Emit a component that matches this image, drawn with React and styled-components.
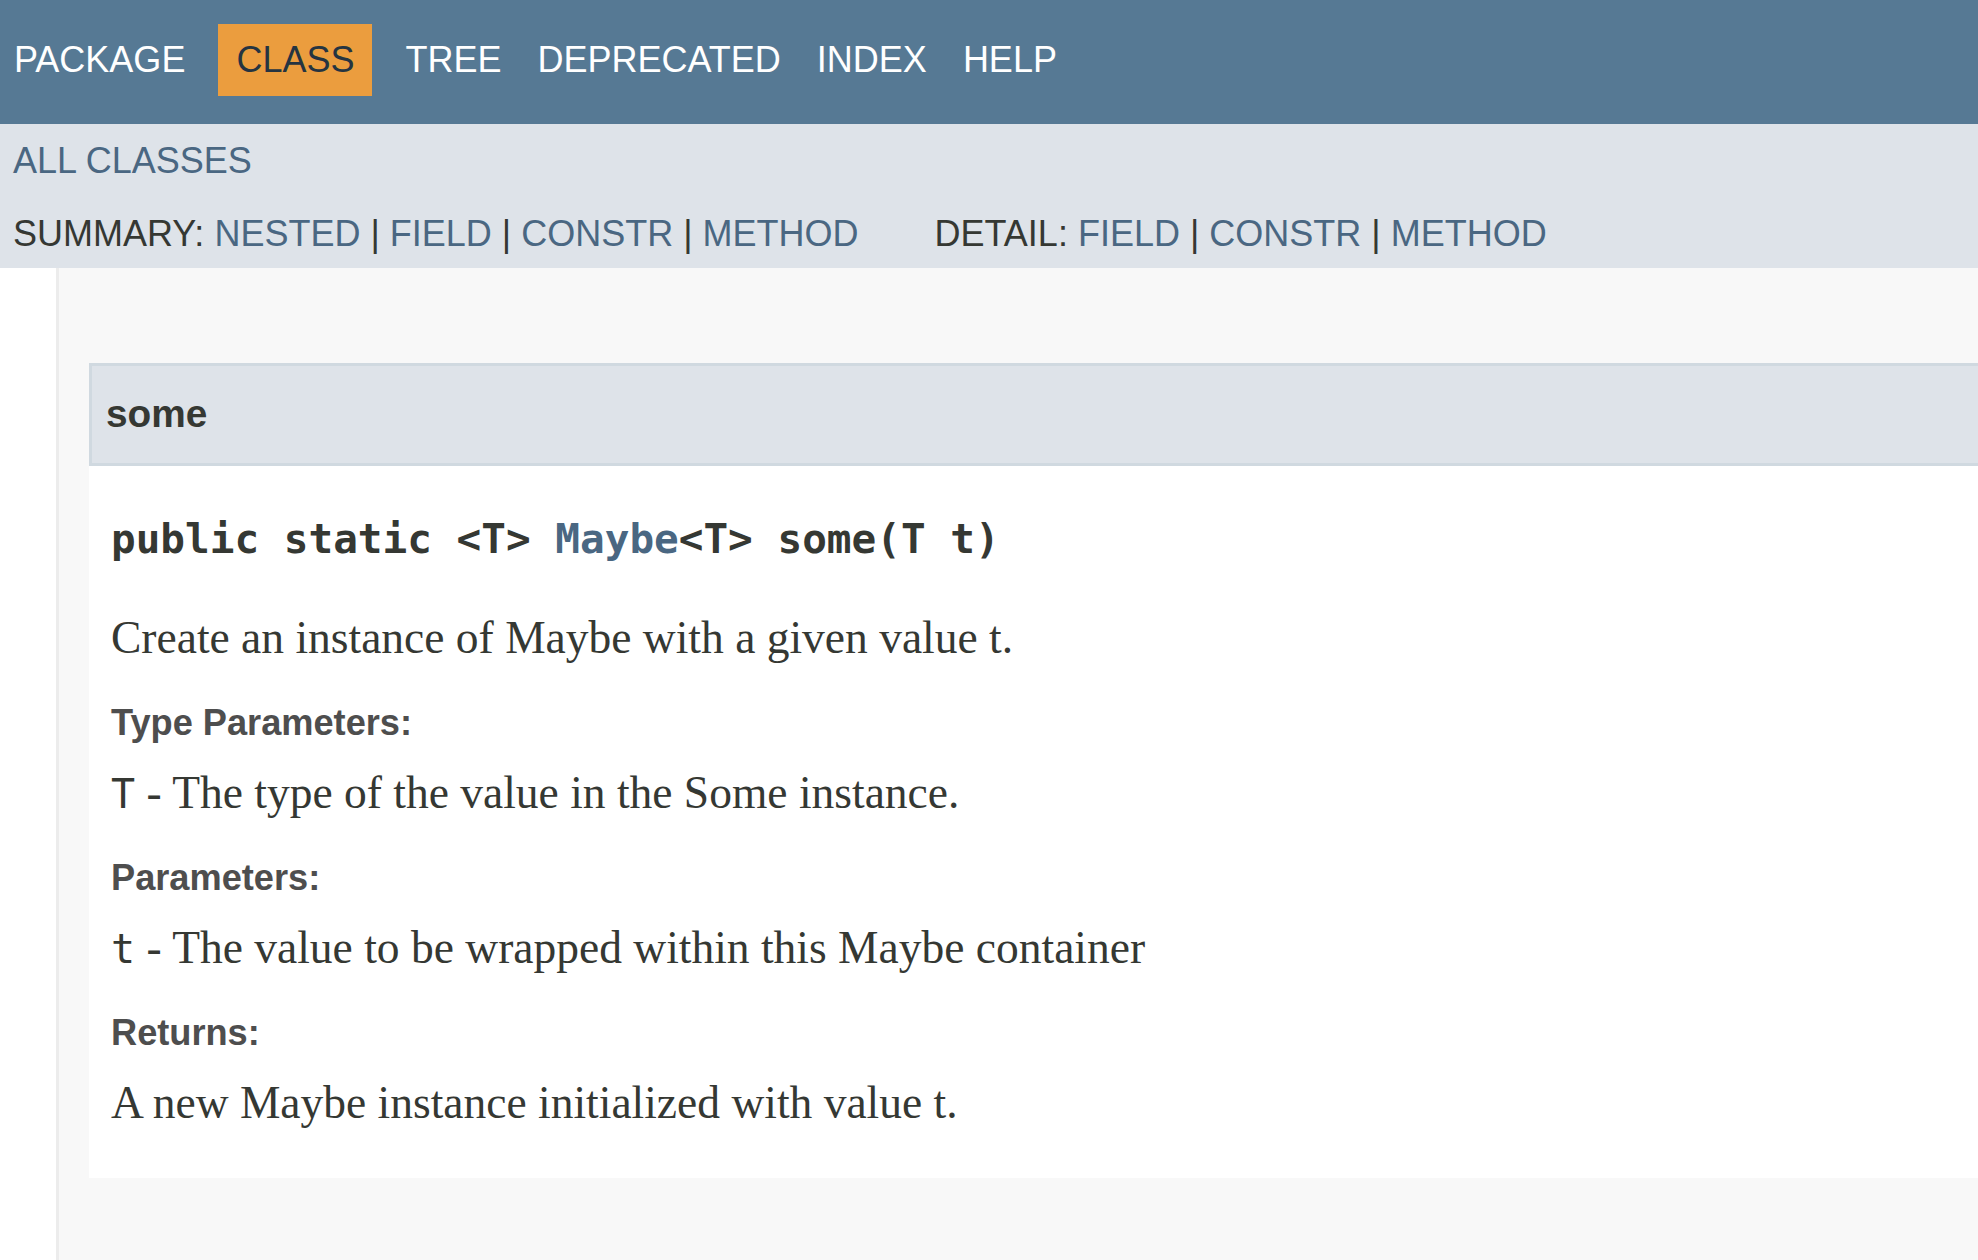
import React from "react";
import styled, { createGlobalStyle } from "styled-components";

const GlobalStyle = createGlobalStyle`
  html, body {
    margin: 0;
    padding: 0;
    background: #ffffff;
    overflow: hidden;
  }
  * {
    box-sizing: border-box;
  }
`;

const Page = styled.div`
  display: flex;
  flex-direction: column;
  min-height: 100vh;
  font-family: "Liberation Sans", Arial, Helvetica, sans-serif;
  color: #353833;
`;

const TopNav = styled.nav`
  display: flex;
  height: 124px;
  padding-top: 24px;
  background: #567994;
`;

const NavList = styled.ul`
  display: flex;
  align-items: flex-start;
  list-style: none;
  margin: 0 0 0 -4px;
  padding: 0;
`;

const NavItem = styled.li`
  padding: 15px 18px;
  margin: ${(p) => (p.$active ? "0 15px" : "0")};
  font-size: 36px;
  line-height: 42px;
  color: ${(p) => (p.$active ? "#253441" : "#ffffff")};
  background: ${(p) => (p.$active ? "#eb9d3e" : "transparent")};
  white-space: nowrap;
`;

const SubNav = styled.div`
  height: 144px;
  padding: 16px 0 0 13px;
  background: #dee3e9;
  font-size: 36px;
  line-height: 42px;
`;

const NavLink = styled.a`
  color: #4a6782;
  text-decoration: none;
`;

const SubNavRow = styled.div`
  display: flex;
  margin-top: 31px;
  white-space: pre;
`;

const SubNavGroup = styled.div`
  display: flex;
  margin-right: ${(p) => p.$gap || 0}px;
`;

const Content = styled.div`
  display: flex;
  flex: 1;
`;

const LeftStrip = styled.div`
  width: 56px;
  background: #ffffff;
`;

const Main = styled.main`
  flex: 1;
  border-left: 3px solid #ececec;
  background: #f8f8f8;
  padding: 95px 0 0 30px;
`;

const MemberHeader = styled.h4`
  margin: 0;
  padding: 24px 0 25px 14px;
  background: #dee3e9;
  border: 3px solid #d0d9e0;
  border-right: none;
  font-size: 38.8px;
  font-weight: bold;
  line-height: 48px;
  color: #353833;
`;

const MemberBody = styled.section`
  background: #ffffff;
  padding: 49px 0 48px 22px;
`;

const Signature = styled.pre`
  margin: 0;
  font-family: "DejaVu Sans Mono", "Liberation Mono", monospace;
  font-size: 41px;
  font-weight: bold;
  line-height: 48px;
  color: #353833;
`;

const Description = styled.div`
  margin-top: 48px;
  font-family: "Liberation Serif", Georgia, serif;
  font-size: 45.5px;
  line-height: 54px;
  color: #353833;
`;

const DetailList = styled.dl`
  margin: 0;
`;

const Term = styled.dt`
  margin-top: 37px;
  font-size: 36.2px;
  font-weight: bold;
  line-height: 42px;
  color: #4e4e4e;
`;

const Definition = styled.dd`
  margin: 22px 0 0 0;
  font-family: "Liberation Serif", Georgia, serif;
  font-size: 45.5px;
  line-height: 54px;
  color: #353833;
`;

const Code = styled.code`
  font-family: "DejaVu Sans Mono", "Liberation Mono", monospace;
  font-size: 40px;
  line-height: 1;
`;

const topItems = ["PACKAGE", "CLASS", "TREE", "DEPRECATED", "INDEX", "HELP"];

function LinkList({ label, links }) {
  return (
    <>
      <span>{label} </span>
      {links.map((l, i) => (
        <span key={l}>
          <NavLink href="#">{l}</NavLink>
          {i < links.length - 1 ? " | " : ""}
        </span>
      ))}
    </>
  );
}

export default function App() {
  return (
    <Page>
      <GlobalStyle />
      <TopNav>
        <NavList>
          {topItems.map((item) => (
            <NavItem key={item} $active={item === "CLASS"}>
              {item}
            </NavItem>
          ))}
        </NavList>
      </TopNav>

      <SubNav>
        <div>
          <NavLink href="#">ALL CLASSES</NavLink>
        </div>
        <SubNavRow>
          <SubNavGroup $gap={76}>
            <LinkList label="SUMMARY:" links={["NESTED", "FIELD", "CONSTR", "METHOD"]} />
          </SubNavGroup>
          <SubNavGroup>
            <LinkList label="DETAIL:" links={["FIELD", "CONSTR", "METHOD"]} />
          </SubNavGroup>
        </SubNavRow>
      </SubNav>

      <Content>
        <LeftStrip />
        <Main>
          <MemberHeader>some</MemberHeader>
          <MemberBody>
            <Signature>
              public static &lt;T&gt; <NavLink href="#">Maybe</NavLink>&lt;T&gt; some(T t)
            </Signature>
            <Description>Create an instance of Maybe with a given value t.</Description>
            <DetailList>
              <Term>Type Parameters:</Term>
              <Definition>
                <Code>T</Code> - The type of the value in the Some instance.
              </Definition>
              <Term>Parameters:</Term>
              <Definition>
                <Code>t</Code> - The value to be wrapped within this Maybe container
              </Definition>
              <Term>Returns:</Term>
              <Definition>A new Maybe instance initialized with value t.</Definition>
            </DetailList>
          </MemberBody>
        </Main>
      </Content>
    </Page>
  );
}
